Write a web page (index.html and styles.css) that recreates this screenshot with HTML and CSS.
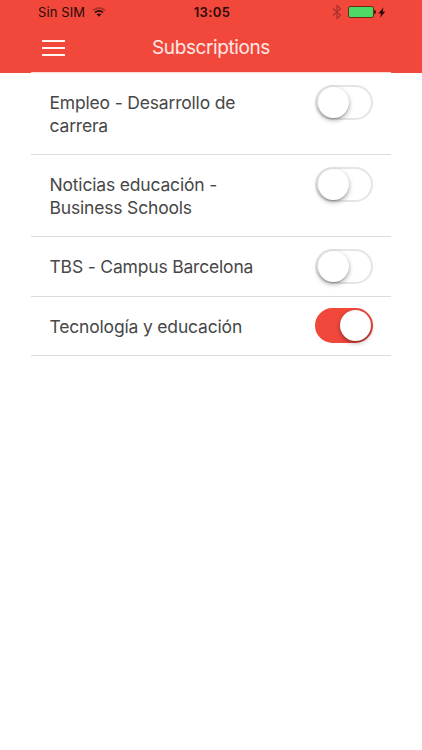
FILE: index.html
```html
<!DOCTYPE html>
<html lang="es">
<head>
<meta charset="utf-8">
<title>Subscriptions</title>
<link rel="stylesheet" href="styles.css">
</head>
<body>
<header class="header">
  <div class="status">
    <div class="carrier"><span>Sin SIM</span>
      <svg class="wifi" width="14" height="10" viewBox="0 0 14 10"><g fill="none" stroke="#2a0b08" stroke-width="1.7"><path d="M1 3.5Q7-1.5 13 3.5" opacity=".35"/><path d="M3 5.6Q7 2.3 11 5.6"/></g><path fill="#2a0b08" d="M4.6 7.3Q7 5.5 9.4 7.3L7 9.7z"/></svg>
    </div>
    <div class="clock">13:05</div>
    <div class="indicators">
      <svg width="10" height="16" viewBox="0 0 10 16"><path d="M1 4.5L8.5 11.3L5 14.5V1.5L8.5 4.7L1 11.5" fill="none" stroke="#a3322a" stroke-width="1.1"/></svg>
      <svg class="battery" width="29" height="12" viewBox="0 0 29 12"><rect x=".5" y=".5" width="25" height="11" rx="1.5" fill="#4cd964" stroke="#6f2a17"/><path d="M26.2 3.8Q28 4 28 6T26.2 8.2z" fill="#3a0d08"/></svg>
      <svg class="bolt" width="8" height="11" viewBox="0 0 8 11"><path d="M5.6.2L.5 6.4H3.1L2 10.8L7.2 4.4H4.6z" fill="#220806"/></svg>
    </div>
  </div>
  <div class="navbar">
    <div class="menu"><i></i><i></i><i></i></div>
    <h1 class="title">Subscriptions</h1>
  </div>
</header>
<main class="list">
  <div class="row row-tall"><span class="label">Empleo - Desarrollo de<br>carrera</span><span class="switch"><i class="knob"></i></span></div>
  <div class="row row-tall"><span class="label">Noticias educación -<br>Business Schools</span><span class="switch"><i class="knob"></i></span></div>
  <div class="row"><span class="label">TBS - Campus Barcelona</span><span class="switch"><i class="knob"></i></span></div>
  <div class="row"><span class="label">Tecnología y educación</span><span class="switch on"><i class="knob"></i></span></div>
</main>
</body>
</html>
```
FILE: styles.css
```css
* { box-sizing: border-box; }
body { margin: 0; background: #fff; font-family: Inter, "Liberation Sans", sans-serif; }
svg { display: block; }
.header { height: 73px; background: #f1483b; }
.status {
  display: grid; grid-template-columns: 1fr auto 1fr; align-items: center;
  height: 24px; padding: 0 36px 0 38px; color: #2a0b08; font-size: 13px;
}
.carrier { display: flex; align-items: center; gap: 7px; letter-spacing: .1px; }
.clock { font-weight: 600; letter-spacing: .4px; }
.indicators { display: flex; align-items: center; justify-content: flex-end; }
.battery { margin: 0 1px 0 6px; }
.navbar {
  display: grid; grid-template-columns: 42px 1fr 42px; align-items: center;
  height: 48px;
}
.menu { display: flex; flex-direction: column; gap: 5px; width: 23px; margin-left: 42px; }
.menu i { height: 2px; background: #fff4f2; }
.title { margin: 0; text-align: center; color: #ffe9e6; font-size: 19px; font-weight: 400; line-height: 24px; letter-spacing: -.4px; }
.list { width: 360px; margin: -1px 0 0 31px; background: #fff; border-top: 1px solid #fad9d6; }
.row {
  display: flex; justify-content: space-between; align-items: flex-start;
  height: 59.5px; padding: 12px 18px 0 18.5px; border-bottom: 1px solid #dcdcdc;
}
.row-tall { height: 82px; }
.label { padding-top: 7px; color: #474747; font-size: 17.5px; line-height: 22.5px; letter-spacing: -.18px; white-space: nowrap; }
.switch { display: flex; width: 58px; height: 35px; border: 2px solid #e5e5e5; border-radius: 18px; }
.knob { width: 31px; height: 31px; margin-left: 1px; border-radius: 50%; background: #fff; box-shadow: 0 2px 5px rgba(0,0,0,.34), 0 1px 1px rgba(0,0,0,.18); }
.on { justify-content: flex-end; margin-top: -1px; background: #f1483b; border-color: #f1483b; }
```
